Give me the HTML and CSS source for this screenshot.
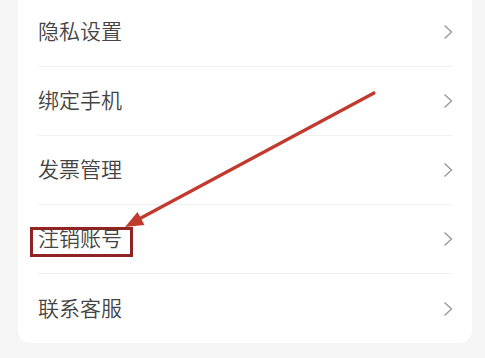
FILE: index.html
```html
<!DOCTYPE html>
<html lang="zh">
<head>
<meta charset="utf-8">
<link rel="stylesheet" href="styles.css">
</head>
<body>
<div class="card">
  <div class="row"><span class="label">隐私设置</span><svg class="chev" viewBox="0 0 10 16"><path d="M1.5 1.5 L8.5 8 L1.5 14.5"/></svg></div>
  <div class="row"><span class="label">绑定手机</span><svg class="chev" viewBox="0 0 10 16"><path d="M1.5 1.5 L8.5 8 L1.5 14.5"/></svg></div>
  <div class="row"><span class="label">发票管理</span><svg class="chev" viewBox="0 0 10 16"><path d="M1.5 1.5 L8.5 8 L1.5 14.5"/></svg></div>
  <div class="row"><span class="label">注销账号</span><svg class="chev" viewBox="0 0 10 16"><path d="M1.5 1.5 L8.5 8 L1.5 14.5"/></svg></div>
  <div class="row last"><span class="label">联系客服</span><svg class="chev" viewBox="0 0 10 16"><path d="M1.5 1.5 L8.5 8 L1.5 14.5"/></svg></div>
</div>
<div class="highlight"></div>
<svg class="annot" viewBox="0 0 485 358" width="485" height="358">
  <line x1="374" y1="93" x2="139" y2="219" stroke="#c23a2e" stroke-width="3.2" stroke-linecap="round"/>
  <polygon points="125,227 137.5,212 144.5,225" fill="#c23a2e"/>
</svg>
</body>
</html>
```
FILE: styles.css
```css
html, body {
  margin: 0;
  padding: 0;
}
body {
  width: 485px;
  height: 358px;
  overflow: hidden;
  background: #f5f5f5;
  font-family: "Noto Sans CJK SC", "Noto Sans", sans-serif;
  position: relative;
}
.card {
  margin: -2px 0 0 18px;
  width: 454px;
  background: #ffffff;
  border-radius: 0 0 12px 12px;
  padding: 0 20px;
  box-sizing: border-box;
}
.row {
  height: 69px;
  box-sizing: border-box;
  border-bottom: 1px solid #f0f0f0;
  display: flex;
  align-items: center;
  justify-content: space-between;
}
.row.last {
  border-bottom: none;
}
.label {
  font-size: 21px;
  font-weight: 350;
  color: #444444;
  line-height: 1;
  padding-bottom: 3px;
}
.chev {
  width: 10px;
  height: 16px;
  margin-right: -1px;
  fill: none;
  stroke: #9a9a9a;
  stroke-width: 1.4;
}
.highlight {
  position: absolute;
  left: 30px;
  top: 227px;
  width: 103px;
  height: 30px;
  box-sizing: border-box;
  border: 3px solid #8e2424;
}
.annot {
  position: absolute;
  left: 0;
  top: 0;
}
```
